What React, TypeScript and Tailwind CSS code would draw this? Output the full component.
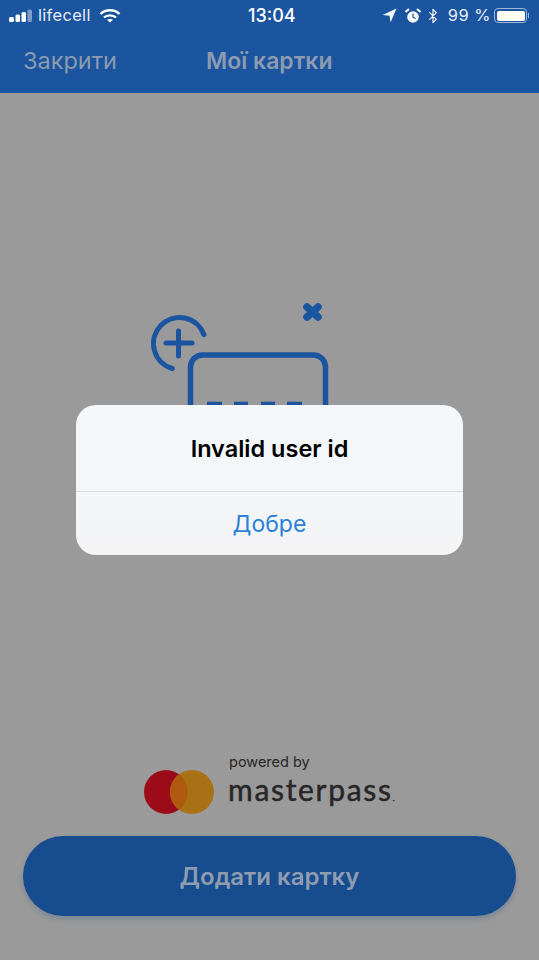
import { Bluetooth } from "lucide-react"

const font = "font-['Inter','Liberation_Sans',sans-serif]"

function StatusBar() {
  return (
    <div className="flex h-[31px] items-center pl-[9px] pr-[10px] text-[16.5px] text-[#e8edf4]">
      <div className="flex w-[239px] items-center">
        <svg width="25" height="14" viewBox="0 0 25 14" className="mr-[4px]">
          <rect x="0" y="8" width="5" height="5" rx="1.5" fill="#fff" />
          <rect x="6.5" y="5.5" width="4.5" height="7.5" rx="1.5" fill="#fff" />
          <rect x="12.5" y="3" width="4.5" height="10" rx="1.5" fill="#fff" />
          <rect x="18.5" y="0.5" width="4.5" height="12.5" rx="1.5" fill="#7f9cc6" />
        </svg>
        <span className="tracking-[0.3px]">lifecell</span>
        <svg width="22" height="16" viewBox="0 0 22 16" fill="none" stroke="#fff" strokeWidth="2.4" className="ml-[8px]">
          <path d="M1.5 6 C6.5 1 15.5 1 20.5 6" />
          <path d="M5 9.5 C8 6.6 14 6.6 17 9.5" />
          <path d="M11 14.5 L8 11.8 C9.6 10.6 12.4 10.6 14 11.8 Z" fill="#fff" stroke="none" />
        </svg>
      </div>
      <span className="text-[18px] font-medium text-white">13:04</span>
      <div className="flex flex-1 items-center justify-end">
        <svg width="15" height="15" viewBox="0 0 14 14">
          <path d="M13.5 0.5 L0.5 6.5 L7 7.2 L8 13.5 Z" fill="#f2f5f9" />
        </svg>
        <svg width="16" height="16" viewBox="0 0 16 16" className="ml-[8px]">
          <circle cx="8" cy="9" r="5.8" fill="#f6f8fb" />
          <path d="M8 5.5 V9.2 L10.5 10.6" stroke="#1b549f" strokeWidth="1.2" fill="none" />
          <path d="M0.5 4 L4 1 M15.5 4 L12 1" stroke="#f6f8fb" strokeWidth="2" />
        </svg>
        <Bluetooth className="ml-[4px] h-[20px] w-[16px] text-[#f2f5f9]" strokeWidth={1.8} />
        <span className="ml-[7px] text-[16.5px] tracking-[0.5px]">99 %</span>
        <div className="ml-[3px] flex h-[15px] w-[33px] items-center rounded-[4px] border border-[#9db7da] p-[1.5px]">
          <div className="h-full w-full rounded-[2px] bg-[#fffff2]" />
        </div>
        <div className="ml-[1px] h-[5px] w-[1px] bg-[#9db7da]" />
      </div>
    </div>
  )
}

function CardIllustration() {
  return (
    <svg width="190" height="170" viewBox="0 0 190 170" fill="none" stroke="#1b559f" strokeLinecap="round" className="ml-[145px]">
      {/* svg origin is at page 145,297 */}
      <path d="M58.9 37.6 A26 26 0 1 0 27.2 71.5" strokeWidth="5" />
      <path d="M21 46 H47 M33.5 34 V59" strokeWidth="5" />
      <path d="M162 10 L173 20 M173 10 L162 20" strokeWidth="7.5" />
      <rect x="45.5" y="58" width="135" height="100" rx="12" strokeWidth="5.5" />
      <path d="M62 107 H77 M89 107 H103 M116 107 H130 M142 107 H157" strokeWidth="4.5" strokeLinecap="butt" />
    </svg>
  )
}

function Masterpass() {
  return (
    <div className="ml-[144px] flex items-center">
      <svg width="70" height="44" viewBox="0 0 70 44">
        <circle cx="22" cy="22" r="22" fill="#9c0c18" />
        <circle cx="48" cy="22" r="22" fill="#a87116" />
        <path d="M35 4.3 A22 22 0 0 1 35 39.7 A22 22 0 0 1 35 4.3 Z" fill="#b05a10" />
      </svg>
      <div className="ml-[14px] flex flex-col">
        <span className="ml-[1px] mt-[-26px] h-[17px] text-[14.5px] leading-[17px] text-[#262626]">powered by</span>
        <span className="mt-[3px] h-[32px] font-['Lato',sans-serif] text-[30px] leading-[32px] tracking-[1.7px] text-[#272727] [-webkit-text-stroke:0.5px_#272727]">
          masterpass<span className="text-[8px] font-normal">.</span>
        </span>
      </div>
    </div>
  )
}

export default function App() {
  return (
    <div className={`relative flex h-[960px] w-[539px] flex-col overflow-hidden bg-[#9a9a9a] ${font}`}>
      <header className="h-[93px] bg-[#1b549f]">
        <StatusBar />
        <div className="flex items-center pl-[23px] pt-[12px] text-[23.5px] leading-[36px] text-[#8c9bb0]">
          <span className="w-[183px]">Закрити</span>
          <span className="text-[23px] font-semibold">Мої картки</span>
        </div>
      </header>

      <main className="flex flex-1 flex-col">
        <div className="pt-[204px]">
          <CardIllustration />
        </div>
        <div className="mt-auto">
          <Masterpass />
          <button className="mx-[23px] mb-[44px] mt-[22px] flex h-[80px] w-[493px] items-center justify-center rounded-[40px] bg-[#174c8f] pt-[2px] text-[24px] font-semibold text-[#8f9db0] shadow-[0_3px_5px_rgba(23,76,143,0.25)]">
            Додати картку
          </button>
        </div>
      </main>

      {/* alert sits over the dimmed page */}
      <div className="absolute left-[76px] top-[405px] flex h-[150px] w-[387px] flex-col overflow-hidden rounded-[20px] bg-gradient-to-b from-[#f4f8fb] to-[#f4f4f5]">
        <div className="flex h-[87px] items-center justify-center border-b border-[#dcdcdf] pt-[2px] text-[23.5px] font-semibold text-black">
          Invalid user id
        </div>
        <div className="flex flex-1 items-center justify-center pt-[1px] text-[23px] text-[#2a82d8]">Добре</div>
      </div>
    </div>
  )
}
